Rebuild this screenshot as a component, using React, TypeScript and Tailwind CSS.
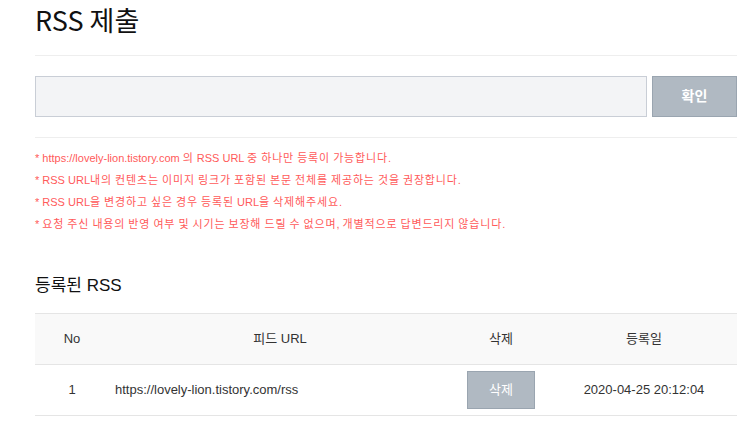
import React from "react";

const notices = [
  "* https://lovely-lion.tistory.com 의 RSS URL 중 하나만 등록이 가능합니다.",
  "* RSS URL내의 컨텐츠는 이미지 링크가 포함된 본문 전체를 제공하는 것을 권장합니다.",
  "* RSS URL을 변경하고 싶은 경우 등록된 URL을 삭제해주세요.",
  "* 요청 주신 내용의 반영 여부 및 시기는 보장해 드릴 수 없으며, 개별적으로 답변드리지 않습니다.",
];

function Spaced({ text }: { text: string }) {
  const parts = text.split(/([\uac00-\ud7a3]+)/);
  return (
    <>
      {parts.map((p, i) =>
        /[\uac00-\ud7a3]/.test(p) ? (
          <span key={i} className="tracking-[0.85px]">
            {p}
          </span>
        ) : (
          <span key={i}>{p}</span>
        )
      )}
    </>
  );
}

export default function App() {
  return (
    <div
      className="w-[744px] h-[438px] overflow-hidden bg-white"
      style={{ fontFamily: '"Liberation Sans", "Noto Sans CJK KR", sans-serif' }}
    >
      <div className="ml-[35px] w-[702px]">
        <h1
          className="h-[55px] pt-[2px] text-[27px] leading-[36px] text-[#111] font-normal"
          style={{ fontFamily: '"Noto Sans CJK KR", sans-serif' }}
        >
          RSS 제출
        </h1>
        <div className="h-px bg-[#eeeeee]" />
        <div className="flex gap-[5px] pt-[20px] pb-[20px]">
          <input
            className="w-[612px] h-[41px] bg-[#f3f4f6] border border-[#c9ced6] outline-none"
            type="text"
          />
          <button className="w-[85px] h-[41px] bg-[#b0b9c2] border border-[#9aa5b0] text-white text-[14px] font-bold">
            확인
          </button>
        </div>
        <div className="h-px bg-[#eeeeee]" />
        <div className="pt-[9px] flex flex-col">
          {notices.map((t) => (
            <p key={t} className="h-[22px] leading-[22px] text-[11px] text-[#ff5a5a] whitespace-nowrap">
              <Spaced text={t} />
            </p>
          ))}
        </div>
        <h2 className="mt-[39px] text-[17px] leading-[24px] text-[#111] font-normal">등록된 RSS</h2>
        <div className="mt-[15px] border-t border-[#e5e5e5]">
          <div className="flex h-[51px] items-center bg-[#f9f9f9] text-[13px] text-[#333] border-b border-[#e5e5e5]">
            <div className="w-[74px] text-center">No</div>
            <div className="w-[342px] text-center">피드 URL</div>
            <div className="w-[100px] text-center">삭제</div>
            <div className="flex-1 text-center">등록일</div>
          </div>
          <div className="flex h-[51px] items-center text-[13px] text-[#333] border-b border-[#e5e5e5]">
            <div className="w-[74px] text-center">1</div>
            <div className="w-[342px] pl-[6px]">https://lovely-lion.tistory.com/rss</div>
            <div className="w-[100px] flex justify-center">
              <button className="w-[68px] h-[38px] bg-[#b0b9c2] border border-[#9aa5b0] text-white text-[13px]">
                삭제
              </button>
            </div>
            <div className="flex-1 text-center">2020-04-25 20:12:04</div>
          </div>
        </div>
      </div>
    </div>
  );
}
